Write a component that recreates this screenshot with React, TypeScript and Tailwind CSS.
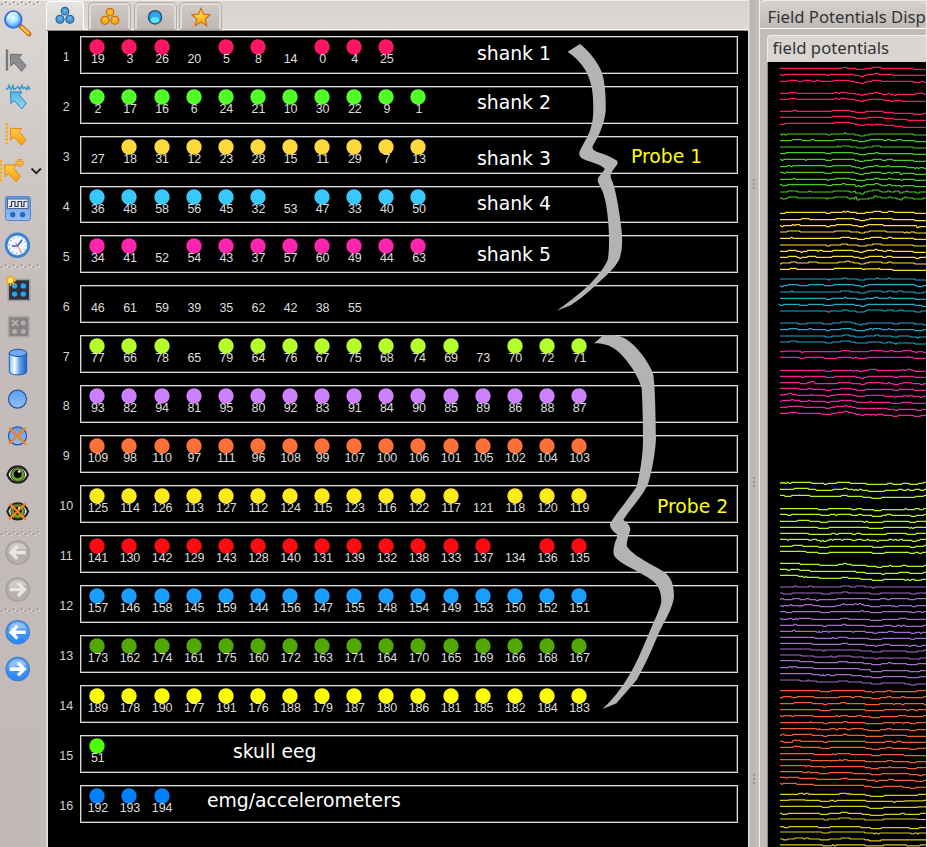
import React from "react";

type Group = { color: string; cells: string };

// A trailing "-" marks a channel that carries no dot.
const groups: Group[] = [
  { color: "#ff1764", cells: "19 3 26 20- 5 8 14- 0 4 25" },
  { color: "#52ff29", cells: "2 17 16 6 24 21 10 30 22 9 1" },
  { color: "#ffd93b", cells: "27- 18 31 12 23 28 15 11 29 7 13" },
  { color: "#38c8ff", cells: "36 48 58 56 45 32 53- 47 33 40 50" },
  { color: "#ff26ad", cells: "34 41 52- 54 43 37 57 60 49 44 63" },
  { color: "#ffffff", cells: "46- 61- 59- 39- 35- 62- 42- 38- 55-" },
  { color: "#b3ff29", cells: "77 66 78 65- 79 64 76 67 75 68 74 69 73- 70 72 71" },
  { color: "#cc80ff", cells: "93 82 94 81 95 80 92 83 91 84 90 85 89 86 88 87" },
  { color: "#ff7038", cells: "109 98 110 97 111 96 108 99 107 100 106 101 105 102 104 103" },
  { color: "#ffe91a", cells: "125 114 126 113 127 112 124 115 123 116 122 117 121- 118 120 119" },
  { color: "#ff0a14", cells: "141 130 142 129 143 128 140 131 139 132 138 133 137 134- 136 135" },
  { color: "#1a9eff", cells: "157 146 158 145 159 144 156 147 155 148 154 149 153 150 152 151" },
  { color: "#52a800", cells: "173 162 174 161 175 160 172 163 171 164 170 165 169 166 168 167" },
  { color: "#ffff00", cells: "189 178 190 177 191 176 188 179 187 180 186 181 185 182 184 183" },
  { color: "#4dff0a", cells: "51" },
  { color: "#0080ff", cells: "192 193 194" },
];

// Each trace: baseline, then pairs of (x, offset from baseline in steps).
type TraceSet = { color: string; top: number; traces: number[][] };

const traceSets: TraceSet[] = [
  {
    color: "#ff1764",
    top: 0,
    traces: [
      [205, 308, -1, 320, 0, 348, 1, 376, 0, 396, -1, 424, 0, 520, 1],
      [223, 124, 1, 134, 0, 258, 1, 268, 0, 342, 1, 358, 2, 372, 1, 382, 0, 404, -1, 416, 0, 458, 1],
      [244, 146, -1, 172, 0, 190, -1, 214, 0, 228, -1, 240, 0, 280, -1, 328, 0, 344, 1, 358, 2, 372, 1, 380, 0, 396, -1, 424, 0, 520, 1, 542, 0, 552, 1],
      [280, 150, -1, 168, 0, 284, -1, 292, 0, 300, -1, 320, 0, 346, 1, 362, 2, 370, 1, 384, 0, 404, -1, 414, 0, 426, 1, 444, 0, 450, 1, 462, 2, 470, 1, 526, 0, 552, 1],
      [298, 150, -1, 168, 0, 284, -1, 292, 0, 300, -1, 320, 0, 344, 1, 358, 2, 370, 1, 382, 0, 430, 1, 452, 2, 464, 1, 486, 2],
      [334, 158, -1, 170, 0, 276, -1, 330, 0, 346, 1, 376, 0, 430, 1, 460, 2, 520, 3, 550, 2],
      [352, 276, -1, 334, 0, 346, 1, 382, 0, 430, 1, 460, 2, 502, 3],
      [373, 134, -1, 284, -2, 330, -1, 344, 0, 358, 1, 376, 0, 394, 1, 400, 0, 430, 1, 464, 2, 488, 3],
    ],
  },
  {
    color: "#44cf20",
    top: 0,
    traces: [
      [402, 124, 1, 128, 0, 134, 1, 140, 0, 262, 1, 272, 0, 312, -1, 318, 0, 344, 1, 358, 2, 374, 1, 388, 0, 520, 1],
      [422, 156, -1, 186, 0, 212, -1, 224, 0, 284, -1, 336, 0, 354, 1, 376, 0, 388, -1, 430, 0, 440, -1, 452, 0, 470, -1, 486, 0, 524, 1],
      [441, 292, -1, 296, 0, 304, -1, 330, 0, 352, 1, 376, 0, 398, -1, 422, 0, 520, 1],
      [461, 138, -1, 256, 0, 274, -1, 340, 0, 356, 1, 380, 0, 404, -1, 416, 0, 520, 0.8],
      [478, 124, 1, 130, 0, 196, 1, 200, 0, 256, 1, 276, 0, 344, 1, 356, 2, 374, 1, 398, 0, 426, 1, 440, 0, 458, 1, 520, 2],
      [500, 142, -1, 152, 0, 158, -1, 256, 0, 278, -1, 334, 0, 346, 1, 360, 2, 370, 1, 380, 0, 402, -1, 416, 0, 440, -1, 448, 0, 500, 1, 524, 2, 528, 1, 534, 2, 538, 1, 552, 2],
      [517, 130, 1, 136, 0, 254, 1, 276, 0, 344, 1, 356, 2, 372, 1, 392, 0, 424, 1, 442, 0, 454, 1, 460, 0, 480, 2, 488, 1, 524, 2],
      [538, 160, -1, 166, 0, 262, 1, 268, 0, 286, -1, 330, 0, 348, 1, 376, 0, 402, -1, 418, 0, 444, -1, 454, 0, 482, 1, 488, 0, 524, 1],
      [554, 126, 1, 142, 0, 260, 1, 276, 0, 306, -1, 316, 0, 346, 2, 352, 1, 358, 2, 368, 1, 378, 0, 404, -1, 416, 0, 424, 1, 442, 0, 454, 1, 482, 2, 488, 1, 524, 2],
      [576, 144, -1, 172, 0, 206, -1, 212, 0, 280, -1, 328, 0, 342, -1, 346, 1, 362, 2, 372, 0, 384, -1, 398, -2, 416, -1, 424, 0, 442, -1, 450, 0, 464, -1, 478, 1, 488, 0, 498, -1, 504, 0, 528, 1, 538, 0],
      [594, 126, 1, 138, 0, 146, -1, 172, 0, 260, 1, 264, 0, 284, -1, 322, 0, 328, 1, 334, 0, 340, 1, 344, -1, 350, 2, 358, 1, 386, 0, 402, -2, 410, -1, 424, 0, 446, -1, 454, 0, 470, 1, 480, 2, 486, 0, 494, -1, 500, 0, 520, 1, 550, 0],
    ],
  },
  {
    color: "#ffdc30",
    top: 0,
    traces: [
      [640, 136, -1, 258, 0, 272, -1, 308, -2, 314, -1, 318, -2, 328, -1, 350, 0, 376, -1, 400, -2, 424, -1, 444, -2, 460, -1, 524, 0],
      [659, 184, -1, 208, 0, 288, -1, 344, 0, 358, 1, 376, 0, 388, -1, 458, 0, 524, 1],
      [677, 124, 1, 130, 0, 156, -1, 162, 0, 166, -1, 180, 0, 258, 1, 270, 0, 288, -1, 336, 0, 354, 1, 372, 0, 382, -1, 430, 0, 530, 2, 536, 1],
      [696, 142, -1, 180, 0, 284, -1, 330, 0, 358, 1, 374, 0, 388, -1, 438, 0, 492, 1, 498, 0, 504, 1, 510, 0, 524, 1],
      [715, 152, -1, 158, 0, 302, -1, 330, 0, 352, 1, 374, 0, 392, -1, 426, 0, 444, -1, 456, 0, 522, 1],
      [735, 260, 1, 270, 0, 304, -1, 322, 0, 354, 1, 380, 0, 398, -1, 424, 0, 520, 1],
      [754, 144, -1, 170, 0, 182, 1, 188, 0, 202, -1, 232, 0, 236, -1, 248, 0, 278, -1, 340, 0, 356, 1, 370, 0, 380, -1, 404, -2, 412, -1, 428, 0, 440, -1, 456, 0, 520, 1],
      [772, 144, -1, 170, 0, 178, 1, 184, 0, 202, -1, 228, 0, 276, -1, 340, 0, 358, 1, 374, 0, 386, -1, 428, 0, 440, -1, 456, 0, 526, 1, 538, 0],
      [792, 124, -1, 152, -2, 170, -1, 206, -2, 232, -1, 294, -2, 318, -3, 328, -2, 340, -1, 358, 0, 374, -1, 386, -2, 426, -1, 444, -2, 456, -1, 524, 0],
      [808, 150, -1, 170, 0, 282, -1, 366, 0, 376, -0.5, 416, -1, 420, 0, 458, 1],
    ],
  },
  {
    color: "#26a6cf",
    top: 690,
    traces: [
      [147, 264, 1, 270, 0, 308, -1, 320, 0, 354, 1, 376, 0, 408, -1, 416, 0, 444, -1, 452, 0, 524, 1],
      [167, 122, 1, 130, 0, 144, -1, 176, 0, 206, -1, 252, 0, 280, -1, 344, 0, 362, 1, 374, 0, 384, -1, 524, 0, 532, 1, 548, 0],
      [186, 152, -1, 158, 0, 302, -1, 330, 0, 356, 1, 376, 0, 386, -1, 426, 0, 442, -1, 460, 0, 474, -1, 488, 0, 524, 1, 550, 0],
      [205, 258, 1, 274, 0, 312, -1, 320, 0, 350, 1, 376, 0, 402, -1, 416, 0, 446, -1, 454, 0, 524, 1],
      [223, 120, 1, 130, 0, 178, 1, 204, 0, 250, 1, 280, 0, 344, 1, 362, 2, 374, 1, 382, 0, 524, 1, 546, 2],
      [243, 262, 1, 270, 0, 308, -1, 324, 0, 348, 1, 374, 0, 380, -1, 428, 0, 440, -1, 458, 0, 476, -1, 490, 0, 526, 1, 544, 0],
      [279, 174, 1, 200, 0, 248, 1, 276, 0, 302, -1, 334, 0, 346, 1, 358, 2, 366, 1, 382, 0, 460, 1, 476, 0, 522, 1, 550, 2],
      [299, 146, -1, 172, 0, 206, -1, 216, 0, 258, 1, 270, 0, 302, -1, 334, 0, 346, 1, 376, 0, 388, -1, 396, 0, 400, -1, 424, 0, 444, -1, 450, 0, 466, 1, 470, 0, 524, 1, 550, 0],
      [318, 256, 1, 276, 0, 310, -1, 328, 0, 344, 1, 376, 0, 406, -1, 416, 0, 456, 1, 474, 0, 510, 1, 530, 2, 536, 1],
      [336, 150, -1, 170, 0, 256, 1, 276, 0, 302, -1, 330, 0, 346, 1, 384, 0, 424, 1, 442, 0, 452, 1, 464, 2, 470, 1, 524, 2],
    ],
  },
  {
    color: "#f01f9c",
    top: 690,
    traces: [
      [365, 136, -0.5, 184, 1, 190, 0, 304, -1, 328, 0, 388, -1, 430, 0, 448, -1, 460, 0, 488, -1, 514, 0, 526, 1, 532, 0, 550, 1],
      [382, 178, 1, 194, 0, 252, 1, 292, 0, 336, 1, 342, 0, 352, 1, 382, 0, 502, -1, 506, 0, 520, 1],
      [421, 256, 1, 276, 0, 338, 1, 344, 0, 356, 1, 370, 0, 388, -1, 410, 0, 488, -1, 492, 0, 500, -1, 514, 0, 524, 1],
      [439, 184, 1, 192, 0, 256, 1, 284, 0, 348, 1, 362, 2, 370, 1, 382, 0, 460, 1, 476, 0, 522, 1],
      [458, 180, 1, 202, 0, 210, -1, 224, 1, 268, 1, 294, 0, 334, 1, 362, 2, 374, 1, 380, 0, 424, 1, 428, 0, 432, 1, 444, 0, 450, 1, 460, 2, 476, 1, 488, 0, 514, 1, 540, 2, 550, 1],
      [475, 176, 1, 202, 0, 216, 1, 256, 2, 274, 1, 302, 0, 334, 1, 350, 2, 376, 1, 460, 2, 476, 1, 522, 2],
      [493, 122, 1, 128, 0, 144, -1, 156, 0, 170, 1, 212, 0, 216, 1, 256, 2, 270, 1, 290, 0, 334, 1, 350, 2, 376, 1, 432, 2, 464, 3, 470, 2, 490, 1, 498, 2, 504, 1, 508, 2, 512, 1, 518, 2, 538, 3, 548, 2],
      [514, 126, -1, 154, -2, 160, -1, 180, 0, 204, -1, 212, 0, 256, 1, 270, 0, 298, -1, 338, 0, 350, 1, 388, 0, 394, 1, 452, 2, 484, 1, 514, 2],
      [532, 142, -1, 190, 0, 256, 1, 270, 0, 286, -1, 314, -2, 320, -1, 336, 0, 348, 1, 442, 2, 464, 3, 474, 2, 530, 3, 546, 2],
      [550, 150, -1, 172, 0, 244, 1, 274, 0, 292, -1, 310, -2, 324, -1, 336, 0, 346, 1, 362, 2, 372, 1, 392, 2, 396, 1, 404, 2, 410, 1, 430, 2, 458, 3, 474, 2, 522, 3, 542, 2],
    ],
  },
  {
    color: "#b5f51e",
    top: 1380,
    traces: [
      [70, 122, -1, 126, 0, 130, -1, 134, 0, 140, -1, 146, 0, 154, -1, 214, 0, 252, 1, 262, 0, 290, -1, 330, 0, 380, 1, 442, 0, 458, 1, 486, 0, 508, 1, 534, 0, 550, -1],
      [88, 162, -1, 206, 0, 228, 1, 278, 0, 310, -1, 322, 0, 340, 1, 346, 0, 350, 1, 356, 0, 366, 1, 384, 2, 434, 1, 474, 0, 488, 1, 500, 0, 508, 1, 524, 0, 540, 1, 552, 0],
      [106, 134, 1, 154, 0, 210, 1, 276, 1, 304, 0, 322, 1, 368, 2, 394, 3, 424, 2, 526, 1, 552, 0],
      [146, 234, 1, 264, 0, 334, 1, 350, 0, 366, 1, 402, 2, 424, 1, 494, 0, 500, 1, 524, 0, 538, 1, 550, 0],
      [163, 142, 1, 154, 0, 242, 1, 270, 0, 286, 1, 292, 0, 334, 1, 354, 0, 366, 1, 396, 2, 426, 1, 440, 0, 454, 1, 512, 2, 528, 1, 552, 0],
      [184, 172, -1, 208, 0, 240, 1, 264, 0, 370, 1, 376, 0, 384, 1, 430, 0, 508, 1, 528, 0],
      [202, 234, 1, 266, 0, 386, 1, 430, 0, 508, 1, 512, 0, 516, 1, 522, 0],
      [220, 206, 1, 274, 0, 286, 1, 292, 1, 296, 0, 336, 1, 348, 0, 362, 1, 384, 1, 440, 0, 500, 1, 528, 0, 536, 0],
      [238, 142, 1, 146, 0, 206, 1, 216, 0, 230, 1, 240, 2, 246, 1, 250, 2, 260, 1, 268, 0, 276, 1, 280, 0, 304, 1, 310, 0, 334, 1, 350, 0, 366, 1, 380, 0, 386, 1, 410, 2, 416, 1, 430, 1, 446, 0, 458, 1, 464, 0, 470, 1, 478, 0, 488, 1, 508, 1, 516, 2, 530, 1, 540, 0],
      [259, 158, -1, 188, 0, 236, 1, 266, 0, 398, 1, 430, 0, 510, 1, 526, 0, 552, -1],
      [274, 198, 1, 234, 2, 266, 1, 396, 2, 434, 1, 508, 2, 524, 1, 536, 2, 546, 1],
      [310, 180, 1, 208, 1, 238, 2, 284, 2, 294, 1, 310, 0, 320, 1, 334, 2, 380, 3, 410, 4, 426, 3, 448, 2, 454, 3, 486, 2, 500, 3, 552, 2],
      [328, 142, 1, 150, 0, 178, 1, 210, 2, 348, 3, 376, 4, 424, 5, 434, 4, 476, 3, 508, 4, 550, 3],
      [346, 174, 1, 190, 2, 196, 1, 200, 2, 206, 2, 238, 3, 304, 2, 324, 3, 362, 4, 396, 5, 430, 4, 494, 5, 500, 4, 506, 5, 514, 4, 524, 5, 544, 4],
    ],
  },
  {
    color: "#a46acc",
    top: 1380,
    traces: [
      [381, 162, -1, 170, 0, 206, -1, 216, 0, 304, -1, 330, 0, 348, -1, 374, 0, 396, 1, 404, 0],
      [399, 128, 1, 156, 0, 244, 1, 270, 0, 306, -1, 324, 0, 390, 1, 420, 0, 510, 1, 530, 0],
      [419, 122, -1, 130, 0, 158, -1, 180, 0, 198, -1, 208, 0, 224, 0, 228, 1, 236, 0, 290, -1, 386, 0, 420, -1, 440, 0, 450, -1, 506, 0, 526, -1],
      [437, 126, 1, 130, 0, 150, -1, 156, 0, 178, 1, 182, 0, 192, -1, 218, 0, 240, 1, 286, 0, 302, -1, 308, -2, 314, -1, 344, -2, 350, -1, 356, -2, 364, -1, 372, 0, 390, 1, 422, 0, 456, 1, 460, 0, 464, 1, 476, 0, 490, 0, 516, 1, 528, 0],
      [455, 138, 1, 156, 0, 242, 1, 270, 0, 362, -1, 370, 0, 390, 1, 426, 0, 508, 1, 512, 0, 516, 1, 526, 0, 544, 1, 550, 0],
      [475, 124, 1, 146, 0, 156, 1, 166, 0, 170, 1, 176, 0, 214, 1, 302, 0, 326, 1, 390, 2, 426, 1, 470, 1, 478, 0, 500, 1],
      [496, 162, -1, 170, 0, 248, 1, 260, 0, 308, -1, 318, 0, 376, 1, 430, 0, 454, 1, 470, 0, 480, 1, 486, 0, 496, 1, 524, 1, 550, 0],
      [514, 158, -1, 166, 0, 230, 1, 236, 0, 240, 1, 246, 0, 264, 1, 268, 0, 338, 1, 342, 0, 376, 1, 400, 2, 412, 1, 444, 0, 460, 1, 512, 2, 526, 1, 540, 2, 546, 1],
      [532, 224, 1, 276, 0, 280, 1, 294, 0, 322, 1, 386, 2, 426, 1, 470, 1, 512, 2, 524, 1, 546, 1],
      [550, 216, 1, 304, 0, 324, 1, 376, 2, 404, 3, 412, 2, 430, 1, 450, 2, 484, 2, 506, 3, 514, 2, 530, 3, 546, 2],
      [567, 212, 1, 248, 2, 254, 1, 360, 2, 396, 3, 424, 2, 500, 3, 532, 2, 552, 1],
      [585, 184, 1, 222, 2, 270, 1, 276, 2, 290, 1, 334, 2, 370, 3, 406, 4, 414, 3, 484, 3, 508, 4, 540, 3],
      [602, 178, 1, 222, 2, 294, 1, 322, 2, 370, 3, 394, 4, 424, 3, 444, 2, 454, 3, 500, 4, 532, 3],
      [623, 146, -1, 154, 0, 158, -1, 170, 0, 220, 1, 358, 2, 392, 4, 426, 3, 494, 3, 506, 4, 540, 3],
      [641, 216, 1, 240, 2, 246, 1, 250, 2, 258, 1, 270, 2, 286, 1, 334, 2, 366, 3, 394, 4, 426, 3, 500, 4, 538, 3],
      [660, 180, 1, 202, 0, 208, 1, 230, 2, 294, 1, 324, 2, 366, 3, 394, 4, 424, 3, 494, 4, 510, 5, 528, 4],
    ],
  },
  {
    color: "#f0602a",
    top: 1380,
    traces: [
      [692, 240, 1, 272, 0, 374, 1, 396, 2, 404, 1, 440, 0, 454, 1, 530, 0],
      [713, 128, -1, 154, 0, 170, -1, 222, 0, 298, -1, 334, 0, 344, -1, 366, 0, 394, 1, 420, 0, 440, -1, 454, 0, 484, -1, 494, 0, 550, -1],
      [731, 162, -1, 216, 0, 250, 1, 262, 0, 302, -1, 318, 0, 376, 1, 390, 1, 418, 0, 460, 1, 464, 0, 484, 1, 492, 0, 552, 1],
      [749, 240, 1, 270, 0, 376, 1, 432, 0, 500, 1, 506, 0, 526, 1, 534, 0],
      [767, 124, 1, 130, 0, 154, 1, 160, 0, 220, 1, 288, 0, 294, 1, 302, 0, 324, 1, 350, 0, 366, 1, 392, 2, 420, 1, 474, 0, 500, 1, 550, 0],
      [788, 210, -1, 214, 0, 250, 1, 264, 0, 310, -1, 322, 0, 376, 1, 430, 0, 460, 1, 464, 0, 488, 1, 492, 0, 510, 1, 528, 0],
      [806, 230, 1, 236, 0, 240, 1, 270, 0, 286, 1, 294, 0, 320, 1, 334, 0, 370, 1, 384, 2, 420, 1, 440, 0, 454, 1, 508, 2, 528, 1],
      [826, 124, -1, 134, 0, 158, -1, 216, 0, 250, 1, 262, 0, 308, -1, 322, 0, 376, 1, 390, 1, 430, 0, 440, 0, 500, 1, 534, 1, 546, 1],
      [844, 130, 1, 158, -1, 182, 0, 250, 1, 262, 0, 376, 1, 436, 0, 458, 1, 470, 0, 484, 1, 550, 1],
      [862, 160, -1, 182, 0, 242, 1, 270, 0, 376, 1, 394, 2, 418, 1, 440, 0, 454, 1, 508, 2, 530, 1],
      [881, 222, 1, 278, 0, 282, 1, 290, 0, 332, 1, 394, 2, 422, 1, 486, 1, 492, 2, 526, 2],
      [899, 212, 1, 298, 0, 302, 1, 310, 0, 322, 1, 376, 2, 440, 1, 458, 2, 508, 3, 528, 2],
      [917, 196, 1, 200, 0, 212, 1, 250, 2, 256, 1, 374, 2, 392, 3, 416, 2, 448, 1, 452, 2, 502, 3, 530, 2],
      [935, 188, 1, 202, 0, 208, 1, 236, 2, 266, 1, 338, 2, 392, 3, 424, 2, 508, 3, 536, 4, 548, 3],
      [952, 138, 1, 142, 0, 176, 1, 230, 2, 304, 1, 324, 2, 380, 3, 406, 4, 416, 3, 444, 2, 460, 3, 524, 4, 550, 3],
      [970, 124, 1, 128, 0, 170, 1, 222, 2, 372, 3, 394, 4, 428, 3, 488, 4, 510, 5, 526, 4],
    ],
  },
  {
    color: "#d8cc14",
    top: 1380,
    traces: [
      [1003, 176, -1, 190, 0, 196, -1, 206, 0, 298, -1, 322, 0, 326, -1, 330, 0, 376, 1, 390, 2, 432, 1, 534, 0],
      [1021, 146, -0.5, 196, 0, 240, 1, 270, 0, 282, 1, 290, 0, 378, 1, 430, 1, 460, 2, 466, 1, 494, 0.5, 550, 0],
      [1039, 246, 1, 268, 0, 380, 1, 388, 2, 430, 1, 534, 0.5],
      [1060, 126, 1, 142, 0, 240, 1, 266, 0, 302, -1, 324, 0, 366, 1, 390, 2, 430, 1, 482, 0, 494, 1, 540, 0],
      [1077, 252, 1, 264, 0, 298, -1, 330, 0, 374, 1, 430, 0, 534, 0.5],
      [1100, 132, 1, 146, 0, 234, 1, 270, 0, 362, 1, 392, 2, 424, 1, 508, 2, 536, 1],
      [1116, 246, 1, 268, 0, 374, 1, 402, 2, 406, 1, 412, 2, 418, 1, 514, 2, 522, 1, 532, 2, 536, 1],
      [1137, 130, 1, 142, 0, 164, -1, 190, 0, 196, -1, 206, 0, 240, 1, 268, 0, 304, -1, 330, 0, 374, 1, 388, 2, 422, 1, 440, 1, 500, 1, 526, 1],
      [1155, 248, 1, 276, 0, 282, 1, 288, 0, 376, 1, 430, 0, 500, 1, 540, 0],
    ],
  },
];

function tracePath(t: number[]) {
  let prev = t[0];
  let d = `M120 ${prev}`;
  for (let i = 1; i < t.length; i += 2) {
    const y = t[0] + t[i + 1] * 3;
    d += `L${t[i] - 1.5} ${prev}L${t[i] + 1.5} ${y}`;
    prev = y;
  }
  return d + `L558 ${prev}`;
}

function Slot({ top, children }: { top: number; children: React.ReactNode }) {
  return (
    <button className="block h-[37px] w-[46px] shrink-0">
      <svg className="block h-[37px] w-[46px]" viewBox={`0 ${top} 46 37`}>{children}</svg>
    </button>
  );
}

function Grip({ className }: { className: string }) {
  return (
    <svg className={`block w-[46px] shrink-0 overflow-visible ${className}`}>
      {Array.from({ length: 10 }, (_, i) => (
        <g key={i}>
          <path d={`M${1 + i * 4} ${i % 2 ? 0.5 : 2.5}h1.6v1.6h-1.6z`} fill="#8e8785" />
          <path d={`M${2.2 + i * 4} ${i % 2 ? 1.8 : 3.8}h1.4v1.2h-1.4z`} fill="#f2efed" />
        </g>
      ))}
    </svg>
  );
}

function Pointer({ x, y, fill, stroke }: { x: number; y: number; fill: string; stroke: string }) {
  return (
    <path
      transform={`translate(${x} ${y})`}
      d="M0.5 0.8L12 1 9.3 4 16.3 12.3 11.8 17.8 4.2 9.5 1 12.6Z"
      fill={fill}
      stroke={stroke}
      strokeWidth="1"
      strokeLinejoin="round"
    />
  );
}

function Nav({ y, right, fill, ring, arrow }: { y: number; right?: boolean; fill: string; ring: string; arrow: string }) {
  return (
    <g transform={`translate(17.7 ${y})`}>
      <circle r="11.6" fill={fill} stroke={ring} strokeWidth="1.3" />
      <path d="M-9-3A9.5 9.5 0 0 1 9-3C4-6-2 0-9-3Z" fill="#fff" opacity=".35" />
      <path
        d="M-9 0L-1.5-7.5 0.8-5.2-2.5-1.8H8V1.8H-2.5L0.8 5.2-1.5 7.5Z"
        transform={right ? "scale(-1 1)" : undefined}
        fill={arrow}
      />
    </g>
  );
}

function Eye({ y }: { y: number }) {
  return (
    <g transform={`translate(17.7 ${y})`}>
      <path d="M-10.3 0C-6.5-11 6.5-11 10.3 0 6.5 10.6-6.5 10.6-10.3 0Z" fill="#efefef" stroke="#201f1f" strokeWidth="2.2" />
      <circle r="6.8" fill="#6aa823" stroke="#253a0b" />
      <circle r="4" cy="-0.7" fill="#060606" />
      <circle cx="1.5" cy="-3.2" r="1.3" fill="#fff" />
    </g>
  );
}

const Cross = ({ y }: { y: number }) => (
  <path d={`M9.5 ${y - 8}L26 ${y + 8.5}M25.5 ${y - 8}L9 ${y + 8}`} stroke="#f5811f" strokeWidth="2.4" />
);

function Toolbar() {
  return (
    <nav className="flex h-full w-[46px] shrink-0 flex-col overflow-hidden border-t border-[#eeeceb] bg-linear-to-b from-[#dbd8d5] via-[#c4bcba] via-35% to-[#c2bab8]">
      <svg className="block h-0 w-0 shrink-0">
        <defs>
          <radialGradient id="lens" cx=".45" cy=".4"><stop offset="0" stopColor="#e8ffff" /><stop offset=".6" stopColor="#a0e4ff" /><stop offset="1" stopColor="#55a8f4" /></radialGradient>
          <linearGradient id="gold" x2="0" y2="1"><stop stopColor="#ffcd45" /><stop offset="1" stopColor="#ff9d0e" /></linearGradient>
          <linearGradient id="star" x2="0" y2="1"><stop stopColor="#fff04a" /><stop offset="1" stopColor="#ffa51a" /></linearGradient>
          <linearGradient id="sky" x2="0" y2="1"><stop stopColor="#57b5e5" /><stop offset="1" stopColor="#93d5f4" /></linearGradient>
          <linearGradient id="blue" x2="0" y2="1"><stop stopColor="#5a9cf0" /><stop offset="1" stopColor="#98c0f2" /></linearGradient>
          <linearGradient id="tank"><stop stopColor="#75b8ee" /><stop offset=".3" stopColor="#fff" /><stop offset=".6" stopColor="#5d9fe5" /><stop offset="1" stopColor="#195fc7" /></linearGradient>
          <linearGradient id="nav" x2="0" y2="1"><stop stopColor="#62a8f3" /><stop offset="1" stopColor="#2387fb" /></linearGradient>
        </defs>
      </svg>
      <Grip className="h-[3.5px]" />
      <Slot top={4.5}>
        <path d="M20 25L29 33.5" stroke="#b9732a" strokeWidth="5" strokeLinecap="round" />
        <path d="M21.5 26.5L28.5 33" stroke="#ffbf43" strokeWidth="2.5" strokeLinecap="round" />
        <circle cx="13.3" cy="19" r="8.3" fill="url(#lens)" stroke="#3b6ce0" strokeWidth="1.8" />
        <path d="M8 18C9 12 15 11 17 14" fill="none" stroke="#fff" strokeWidth="1.6" opacity=".8" />
      </Slot>
      <Slot top={41.5}>
        <path d="M7 49V70" stroke="#777" strokeWidth="2.4" />
        <Pointer x={9.8} y={53} fill="#8d8d8d" stroke="#6d6d6d" />
      </Slot>
      <Slot top={78.5}>
        <path d="M6 89l2-1 1-3 2 4 2-4 1 4 2-1 2-2 2 3 2-4 1 3 2-1 2 2 1-3 2 3" fill="none" stroke="#3e94c4" strokeWidth="1.5" />
        <Pointer x={10} y={90.5} fill="url(#sky)" stroke="#2487b8" />
      </Slot>
      <Slot top={115.5}>
        <path d="M6.7 122.5V145" stroke="#ffa814" strokeWidth="2.4" strokeDasharray="2.4 1.4" />
        <Pointer x={9.8} y={127} fill="url(#gold)" stroke="#e38a10" />
      </Slot>
      <Slot top={152.5}>
        <path d="M1 159.5V182" stroke="#ffa814" strokeWidth="2.4" strokeDasharray="2.4 1.4" />
        <Pointer x={4.2} y={163.5} fill="url(#gold)" stroke="#e38a10" />
        <path d="M19.6 158.5v8M15.6 162.5h8" stroke="#e38a10" strokeWidth="3.6" />
        <path d="M19.6 159.2v6.6M16.3 162.5h6.6" stroke="#ffbe32" strokeWidth="2" />
        <path d="M31.5 168l4.7 4.7 4.7-4.7" fill="none" stroke="#222" strokeWidth="1.8" />
      </Slot>
      <Slot top={189.5}>
        <rect x="5.4" y="196" width="25" height="24" rx="2.5" fill="url(#blue)" stroke="#5b82c4" />
        <rect x="7.5" y="198.5" width="20.5" height="9.5" fill="#e6ebf3" stroke="#4f6286" />
        <path d="M9 206H11.5V201H15V206H18V201H21.5V206H24V201H27" fill="none" stroke="#323d4d" strokeWidth="1.2" />
        <circle cx="12.7" cy="214.2" r="2.6" fill="#2468ba" /><circle cx="22.6" cy="214.2" r="2.6" fill="#2468ba" />
      </Slot>
      <Slot top={226.5}>
        <circle cx="17.4" cy="244.8" r="11.3" fill="#f2f8ff" stroke="#3d82d2" strokeWidth="2.8" />
        <circle cx="17.4" cy="244.8" r="8.2" fill="none" stroke="#7c9dc4" strokeWidth="1.4" strokeDasharray="1 3.29" />
        <path d="M12 245.5L17.4 245.5 22 239.5" fill="none" stroke="#2b59ce" strokeWidth="1.5" />
        <path d="M15.5 242L21.5 252.5" stroke="#f65950" strokeWidth="1" />
      </Slot>
      <Grip className="h-[8px]" />
      <Slot top={271.5}>
        <rect x="8.3" y="279" width="21.5" height="21" fill="#2e3238" stroke="#a19f9f" strokeWidth="1.6" />
        {[14.6, 23.3].map((x) => [285.4, 293.6].map((y) => <circle key={x + y} cx={x} cy={y} r="2.7" fill="#25a5fa" />))}
        <path d="M10.5 274.5v11M5 280h11M6.5 276l8 8M14.5 276l-8 8" stroke="#ffaa1b" strokeWidth="1.8" />
        <circle cx="10.5" cy="280" r="2.6" fill="#ffea78" />
      </Slot>
      <Slot top={308.5}>
        <rect x="8.5" y="316.2" width="20.5" height="20" fill="#858281" stroke="#aaa5a4" strokeWidth="1.6" />
        <circle cx="23.3" cy="322.6" r="2.5" fill="#b4afae" /><circle cx="14.6" cy="331" r="2.5" fill="#b4afae" /><circle cx="23.3" cy="331" r="2.5" fill="#b4afae" />
        <path d="M12 319.5l6 6M18 319.5l-6 6" stroke="#b4afae" strokeWidth="1.8" />
      </Slot>
      <Slot top={345.5}>
        <path d="M9.3 352V371C9.3 375.5 26.7 375.5 26.7 371V352Z" fill="url(#tank)" stroke="#1d5cae" />
        <ellipse cx="18" cy="352.4" rx="8.7" ry="3.6" fill="#6eaaf2" stroke="#2452a8" />
      </Slot>
      <Slot top={382.5}>
        <circle cx="17.5" cy="398.6" r="9" fill="url(#blue)" stroke="#2853a4" strokeWidth="1.2" />
      </Slot>
      <Slot top={419.5}>
        <circle cx="17.5" cy="435.4" r="9" fill="url(#blue)" stroke="#2853a4" strokeWidth="1.2" />
        <Cross y={435.4} />
      </Slot>
      <Slot top={456.5}><Eye y={474.2} /></Slot>
      <Slot top={493.5}><Eye y={511} /><Cross y={511} /></Slot>
      <Grip className="h-[3px]" />
      <Slot top={533.5}><Nav y={552} fill="#b6afad" ring="#a39c9a" arrow="#e9e6e4" /></Slot>
      <Slot top={570.5}><Nav y={589} right fill="#b6afad" ring="#a39c9a" arrow="#e9e6e4" /></Slot>
      <Grip className="h-[6px]" />
      <Slot top={613.5}><Nav y={631.7} fill="url(#nav)" ring="#3c7cd0" arrow="#fff" /></Slot>
      <Slot top={650.5}><Nav y={668.6} right fill="url(#nav)" ring="#3c7cd0" arrow="#fff" /></Slot>
    </nav>
  );
}

function Cluster({ fill, stroke }: { fill: string; stroke: string }) {
  return (
    <svg className="h-5 w-5" viewBox="0 0 20 20" fill={fill} stroke={stroke} strokeWidth="1.1">
      <circle cx="10" cy="5.2" r="3.8" /><circle cx="5" cy="13.2" r="4" /><circle cx="14.8" cy="13.2" r="4" />
      <g fill="#fff" stroke="none" opacity=".2"><circle cx="10" cy="4.4" r="1.7" /><circle cx="5" cy="12.2" r="1.7" /><circle cx="14.8" cy="12.2" r="1.7" /></g>
    </svg>
  );
}

const tabClass = "flex h-[26px] w-[41px] items-center justify-center rounded-t border-2 border-b-0 border-[#dedbd8] bg-linear-to-b from-[#cfcac7] to-[#beb7b4] outline outline-[#b4adaa]";

function Tabs() {
  return (
    <div className="flex h-[31px] shrink-0 items-start border-t border-b-[1.5px] border-t-[#eeeceb] border-b-[#8f8a87] bg-linear-to-b from-[#d7d3d0] to-[#dcd9d6]">
      <div className="flex h-[29px] w-[38px] items-center justify-center rounded-t border border-b-0 border-white bg-linear-to-b from-[#e6e4e2] to-[#dad7d4]">
        <Cluster fill="#479bdc" stroke="#235d91" />
      </div>
      <div className="flex h-[29px] grow gap-[4.5px] border-b border-white pt-[2px] pl-[5px]">
        <div className={tabClass}><Cluster fill="#ffad13" stroke="#bd670c" /></div>
        <div className={tabClass}>
          <svg className="h-5 w-5" viewBox="0 0 20 20"><circle cx="10" cy="10.3" r="6.6" fill="#2ba5f0" stroke="#2b5774" strokeWidth="1.5" /><ellipse cx="10" cy="13" rx="4.4" ry="3" fill="#5ee3ff" /></svg>
        </div>
        <div className={tabClass}>
          <svg className="h-5 w-5" viewBox="0 0 20 20"><path d="M10 1.2L12.5 7.2 19 7.8 14.2 12 15.6 18.4 10 15 4.4 18.4 5.8 12 1 7.8 7.5 7.2Z" fill="url(#star)" stroke="#d96a12" strokeWidth="1.2" /></svg>
        </div>
      </div>
    </div>
  );
}

function Row({ index, group }: { index: number; group: Group }) {
  return (
    <div className="mb-[12px] flex h-[37.97px] items-stretch">
      <span className="w-[32.3px] pt-[14.1px] pl-[4px] text-center leading-[15px] text-[#d0d0d0]">{index + 1}</span>
      <div className="flex w-[658px] border border-[#dcdcdc] shadow-[inset_0_0_0_1px_#4a4a4a]">
        {group.cells.split(" ").map((c) => (
          <span key={c} className="relative flex w-[32.12px] shrink-0 justify-center leading-[15px] text-[#dedede]">
            {!c.endsWith("-") && (
              <svg className="absolute top-[2px] left-[8px] h-[16px] w-[16px]">
                <circle cx="8" cy="8" r="7.7" fill={group.color} />
              </svg>
            )}
            <span className="relative mt-[15px] ml-px">{c.replace("-", "")}</span>
          </span>
        ))}
      </div>
    </div>
  );
}

const note = "absolute whitespace-nowrap font-['DejaVu_Sans',sans-serif] text-[18.8px] leading-[22px]";

function Annotations() {
  return (
    <div className="pointer-events-none absolute inset-0">
      <svg className="absolute top-0 left-0 h-[847px] w-[748px]" fill="#b3b3b3">
        <path transform="translate(540 30) scale(.33333)" d="M83 65L120 42C150 65 175 100 186 128C196 160 198 200 197 245C192 285 175 320 158 348C156 356 160 361 170 365C195 373 215 380 229 391C238 399 230 405 222 416C213 427 210 434 213 445C225 470 236 525 244 595C249 635 246 665 238 688C225 715 195 740 165 768C140 790 115 812 92 826L50 842C90 815 125 785 150 762C175 735 195 710 203 690C208 665 208 620 205 580C202 540 196 505 188 485C180 465 174 460 173 450C175 436 188 430 194 416C180 402 150 397 125 385C115 375 117 368 120 362C130 340 145 320 152 295C162 265 160 235 159 205C157 175 152 150 136 120C122 98 105 80 83 65Z" />
        <path transform="translate(540 325) scale(.33333)" d="M162 55L190 31C225 27 245 35 258 42C290 62 325 110 339 145C346 180 347 290 348 340C346 380 338 430 325 475C305 520 270 550 250 585C262 593 270 602 271 612C270 625 262 635 260 662C275 690 330 715 372 740C395 758 402 780 402 815C398 850 375 885 358 920C335 975 315 1020 290 1065C265 1095 245 1115 230 1135L188 1152C215 1125 245 1090 265 1055C290 1015 305 975 325 930C340 890 358 860 364 830C364 800 355 780 335 765C300 740 255 725 228 700C215 685 222 670 224 655C228 645 234 635 231 628C220 620 210 610 210 598C220 575 260 530 290 485C300 440 308 400 309 350C309 300 308 240 305 190C295 155 270 115 240 85C215 62 195 55 162 55Z" />
      </svg>
      <span className={`${note} top-[43px] left-[477px] text-white`}>shank 1</span>
      <span className={`${note} top-[92px] left-[477px] text-white`}>shank 2</span>
      <span className={`${note} top-[148px] left-[477px] text-white`}>shank 3</span>
      <span className={`${note} top-[193px] left-[477px] text-white`}>shank 4</span>
      <span className={`${note} top-[244px] left-[477px] text-white`}>shank 5</span>
      <span className={`${note} top-[146px] left-[631px] text-[#ffff00]`}>Probe 1</span>
      <span className={`${note} top-[496px] left-[657px] text-[#ffff00]`}>Probe 2</span>
      <span className={`${note} top-[741px] left-[233px] text-white`}>skull eeg</span>
      <span className={`${note} top-[790px] left-[207px] text-white`}>emg/accelerometers</span>
    </div>
  );
}

function Splitter() {
  return (
    <div className="flex w-[11px] shrink-0 flex-col items-center bg-linear-to-r from-[#e8e5e3] via-[#b9b2af] via-25% to-[#c6bfbc]">
      <svg className="h-full w-[11px]" fill="#8f8886">
        {[184, 482, 779].map((y) => (
          <g key={y}><circle cx="6" cy={y - 4} r="1" /><circle cx="6" cy={y} r="1" /><circle cx="6" cy={y + 4} r="1" /></g>
        ))}
      </svg>
    </div>
  );
}

function Potentials() {
  return (
    <section className="flex min-w-0 grow flex-col border-l border-[#f0eeec] bg-[#c3bcb9] font-['Noto_Sans','Open_Sans',sans-serif] text-[16.7px] text-[#333]">
      <header className="h-[29px] shrink-0 overflow-hidden whitespace-nowrap rounded-tl border-t border-b border-t-[#eeeceb] border-b-white bg-linear-to-b from-[#d6d2cf] to-[#c1bab7] pl-[7.5px] leading-[31px]">Field Potentials Disp</header>
      <div className="flex min-h-0 grow flex-col pt-[6px] pl-[7px]">
        <div className="h-[27px] shrink-0 rounded-tl border-t border-l border-[#f0eeec] bg-[#d8d5d2] pl-[4.5px] leading-[23px]">field potentials</div>
        <div className="min-h-0 grow border-l border-[#8a8583] bg-black">
          <svg className="block h-[785px] w-[158px]" viewBox="768 62 158 785">
            <g transform="translate(740 0) scale(.33333)" fill="none" strokeWidth="3.7">
              {traceSets.map((s) => (
                <g key={s.color} stroke={s.color} transform={`translate(0 ${s.top})`}>
                  {s.traces.map((t) => <path key={t[0]} d={tracePath(t)} />)}
                </g>
              ))}
            </g>
          </svg>
        </div>
      </div>
    </section>
  );
}

export default function App() {
  return (
    <div className="relative flex h-[847px] w-[927px] overflow-hidden border-r border-[#eeeceb] bg-[#c2bab8]">
      <Toolbar />
      <main className="flex w-[702px] shrink-0 flex-col">
        <Tabs />
        <div className="min-h-0 grow overflow-hidden border-l-2 border-[#dedbd9] bg-black pt-[4.6px] font-['Liberation_Sans',sans-serif] text-[12.5px] tracking-[-0.15px]">
          {groups.map((g, i) => <Row key={i} index={i} group={g} />)}
        </div>
      </main>
      <Splitter />
      <Potentials />
      <Annotations />
    </div>
  );
}
